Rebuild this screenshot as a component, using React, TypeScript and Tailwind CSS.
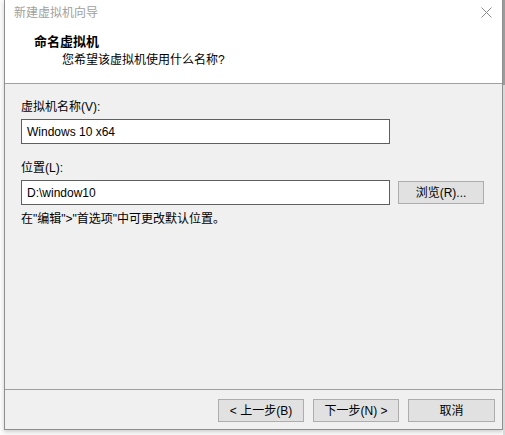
import React from 'react'

const font = "font-['Liberation_Sans','Noto_Sans_CJK_SC',sans-serif]"

function WinButton({ label, className = '' }: { label: string; className?: string }) {
  return (
    <button
      className={`h-[23px] border border-[#adadad] bg-[#e1e1e1] text-[12px] leading-none text-black flex items-center justify-center ${className}`}
    >
      {label}
    </button>
  )
}

export default function App() {
  return (
    <div className={`w-[505px] h-[435px] bg-[#fbfbfb] flex overflow-hidden ${font}`}>
      <div className="ml-[4px] w-[499px] h-[430px] flex flex-col border-l border-r border-b border-[#8f8f8f] bg-[#f0f0f0] shadow-[0_2px_4px_rgba(0,0,0,0.18)]">
        {/* title bar + header */}
        <div className="h-[84px] bg-white border-b border-[#a0a0a0] flex flex-col">
          <div className="h-[26px] flex items-center justify-between pl-[9px] pr-[10px]">
            <span className="text-[12px] text-[#a0a0a0]">新建虚拟机向导</span>
            <svg width="11" height="11" viewBox="0 0 11 11" className="mt-[-2px]">
              <path d="M0.5 0.5 L10.5 10.5 M10.5 0.5 L0.5 10.5" stroke="#8a8a8a" strokeWidth="1" />
            </svg>
          </div>
          <div className="pl-[29px] pt-[7px] text-[13px] font-bold text-black leading-[17px]">命名虚拟机</div>
          <div className="pl-[57px] pt-[2px] text-[12px] text-black leading-[16px]">您希望该虚拟机使用什么名称?</div>
        </div>

        {/* body */}
        <div className="flex-1 flex flex-col pl-[16px] pt-[15px]">
          <div className="text-[12px] leading-[16px] text-black">虚拟机名称(V):</div>
          <div className="mt-[4px] w-[369px] h-[25px] border border-[#5f5f5f] bg-white flex items-center pl-[5px] text-[12px] text-black">
            Windows 10 x64
          </div>
          <div className="mt-[16px] text-[12px] leading-[16px] text-black">位置(L):</div>
          <div className="mt-[4px] flex items-center">
            <div className="w-[369px] h-[25px] border border-[#5f5f5f] bg-white flex items-center pl-[5px] text-[12px] text-black">
              D:\window10
            </div>
            <WinButton label="浏览(R)..." className="ml-[8px] w-[86px]" />
          </div>
          <div className="mt-[6px] text-[12px] leading-[16px] text-black">在"编辑"&gt;"首选项"中可更改默认位置。</div>
        </div>

        {/* footer */}
        <div className="h-[40px] border-t border-[#a0a0a0] flex items-start pt-[9px] pl-[213px] gap-[9px]">
          <WinButton label="< 上一步(B)" className="w-[86px]" />
          <WinButton label="下一步(N) >" className="w-[86px]" />
          <WinButton label="取消" className="w-[87px]" />
        </div>
      </div>
      <div className="flex-1 h-full flex flex-col">
        <div className="h-[85px] bg-[#9c9c9c]" />
        <div className="flex-1 bg-[#d8d8d8]" />
      </div>
    </div>
  )
}
